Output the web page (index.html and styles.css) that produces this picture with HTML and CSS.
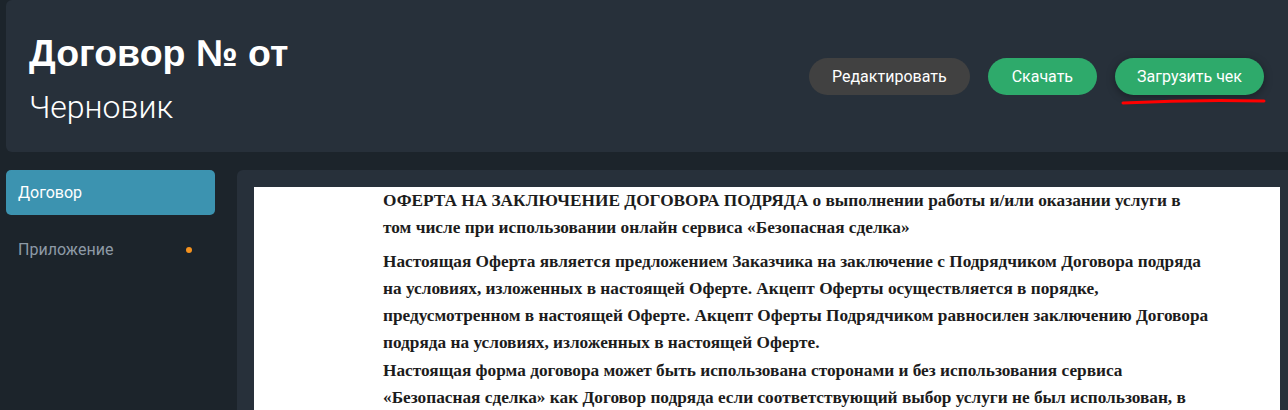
FILE: index.html
```html
<!DOCTYPE html>
<html lang="ru">
<head>
<meta charset="utf-8">
<title>Договор</title>
<link rel="stylesheet" href="styles.css">
</head>
<body>
<div class="app">
  <header class="header">
    <div class="titles">
      <h1 class="title">Договор № от</h1>
      <div class="subtitle">Черновик</div>
    </div>
    <div class="actions">
      <button class="btn btn-dark">Редактировать</button>
      <button class="btn btn-green">Скачать</button>
      <span class="mark-wrap">
        <button class="btn btn-green btn-shadow">Загрузить чек</button>
        <svg class="mark" width="146" height="8" viewBox="0 0 146 8"><path d="M2 5 C 40 3, 100 2, 143 3" stroke="#ff0000" stroke-width="3" fill="none" stroke-linecap="round"/></svg>
      </span>
    </div>
  </header>
  <div class="main">
    <nav class="sidebar">
      <div class="nav-item active">Договор</div>
      <div class="nav-item">Приложение<span class="dot"></span></div>
    </nav>
    <section class="panel">
      <div class="doc">
        <p>ОФЕРТА НА ЗАКЛЮЧЕНИЕ ДОГОВОРА ПОДРЯДА о выполнении работы и/или оказании услуги в<br>том числе при использовании онлайн сервиса «Безопасная сделка»</p>
        <p>Настоящая Оферта является предложением Заказчика на заключение с Подрядчиком Договора подряда<br>на условиях, изложенных в настоящей Оферте. Акцепт Оферты осуществляется в порядке,<br>предусмотренном в настоящей Оферте. Акцепт Оферты Подрядчиком равносилен заключению Договора<br>подряда на условиях, изложенных в настоящей Оферте.<br>Настоящая форма договора может быть использована сторонами и без использования сервиса<br>«Безопасная сделка» как Договор подряда если соответствующий выбор услуги не был использован, в</p>
      </div>
    </section>
  </div>
</div>
</body>
</html>
```

FILE: styles.css
```css
html, body {
  margin: 0;
  padding: 0;
  background: #1c242b;
  overflow: hidden;
  height: 410px;
}

.app {
  padding-left: 6px;
  font-family: Roboto, "Liberation Sans", sans-serif;
}

.header {
  height: 152px;
  box-sizing: border-box;
  background: #27303a;
  border-radius: 6px 0 0 6px;
  display: flex;
  align-items: flex-start;
  justify-content: space-between;
  padding: 31px 24px 0 23px;
}

.title {
  margin: 0;
  font-family: "Liberation Sans", Arial, sans-serif;
  font-weight: bold;
  font-size: 37.5px;
  line-height: 44px;
  color: #ffffff;
}

.subtitle {
  font-family: Roboto, sans-serif;
  font-weight: 300;
  font-size: 32px;
  line-height: 40px;
  color: #ffffff;
  margin-top: 12px;
}

.actions {
  display: flex;
  align-items: center;
  gap: 18px;
  margin-top: 27px;
}

.btn {
  height: 37px;
  padding: 0 24px;
  border: none;
  border-radius: 19px;
  font-family: Roboto, sans-serif;
  font-size: 16px;
  color: #ffffff;
  cursor: pointer;
}

.btn-dark {
  background: #414141;
  padding: 0 23px;
}
.btn-green { background: #2eaa6b; }
.btn-shadow {
  padding: 0 22px;
  box-shadow: 0 2px 8px rgba(0, 0, 0, 0.35);
}

.mark-wrap {
  position: relative;
  display: inline-block;
}

.mark {
  position: absolute;
  left: 6px;
  top: 40px;
}

.main {
  display: flex;
  gap: 22px;
  margin-top: 18px;
}

.sidebar {
  width: 209px;
  flex: none;
  display: flex;
  flex-direction: column;
  gap: 12px;
}

.nav-item {
  height: 45px;
  box-sizing: border-box;
  padding: 0 23px 0 12px;
  display: flex;
  align-items: center;
  justify-content: space-between;
  border-radius: 5px;
  font-size: 16px;
  color: #8d9aa6;
}

.nav-item.active {
  background: #3c93b0;
  color: #ffffff;
}

.dot {
  width: 6px;
  height: 6px;
  border-radius: 50%;
  background: #f5921e;
}

.panel {
  flex: 1;
  background: #27303a;
  border-radius: 6px 0 0 0;
  padding: 17px 8px 0 17px;
  height: 240px;
}

.doc {
  background: #ffffff;
  height: 100%;
  padding: 0 0 0 129px;
  box-sizing: border-box;
  font-family: "Liberation Serif", "Times New Roman", serif;
  font-weight: bold;
  font-size: 17.3px;
  line-height: 27.3px;
  color: #1c1c1c;
  white-space: nowrap;
  overflow: hidden;
}

.doc p {
  margin: 0 0 6px;
}
```
